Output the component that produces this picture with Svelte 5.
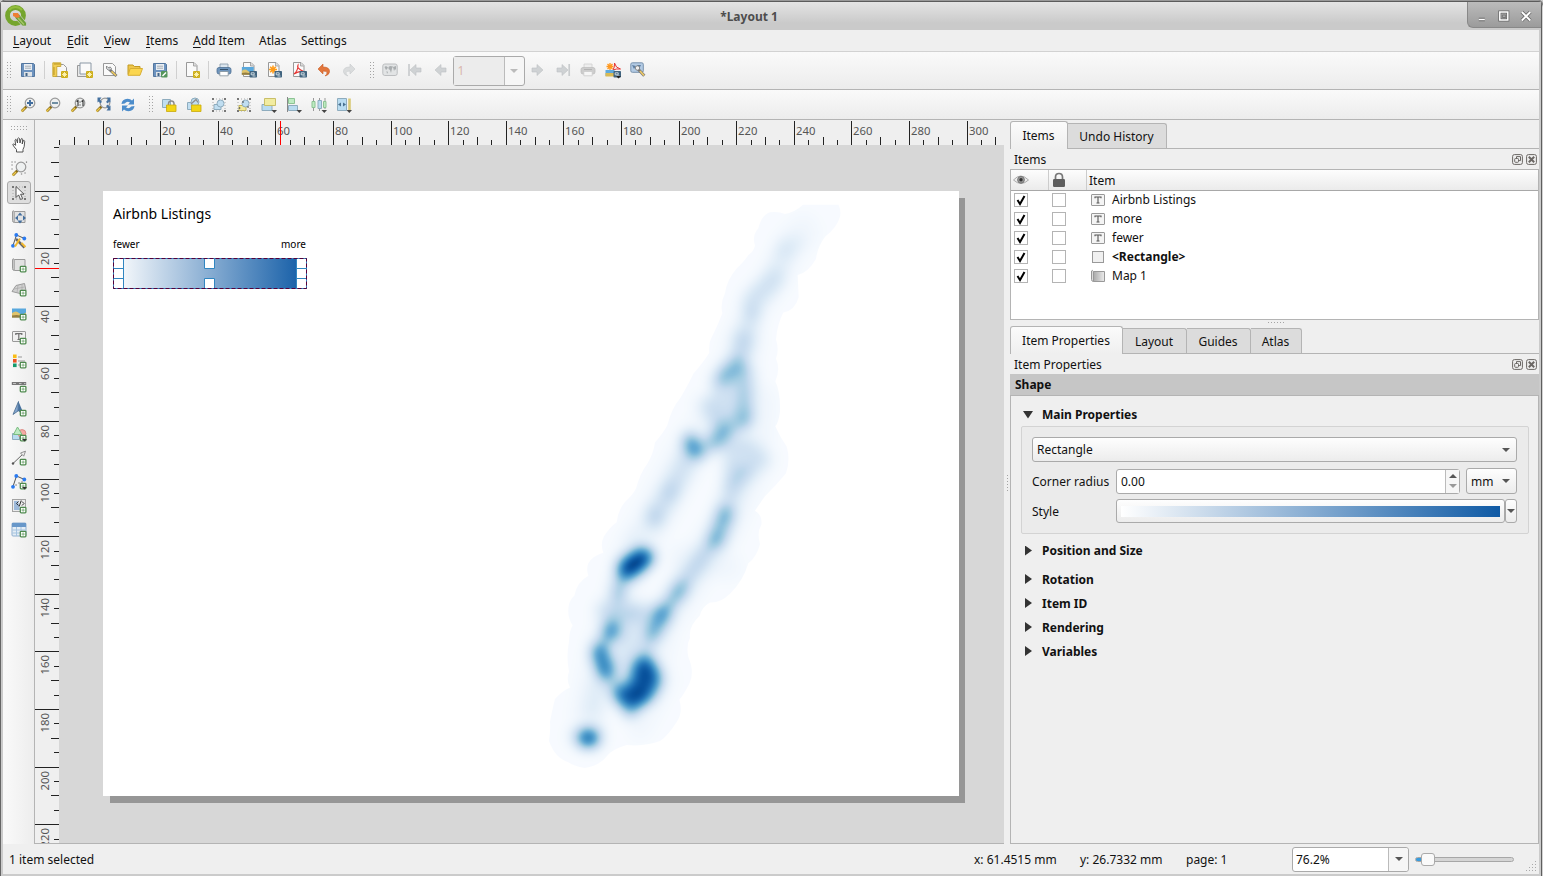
<script>
  const save = '<path d="M1.5 1.500h12l1 1v12h-13z" fill="#6d93bf" stroke="#54779f"/><path d="M4 2h8v6H4z" fill="#e9eef3"/><path d="M5 4.200h6M5 6.200h6" stroke="#a6adb5"/><path d="M4 10h8v4.500H4z" fill="#dfe3e6"/><path d="M5.500 11h2v3h-2z" fill="#426488"/>';
  const star = '<rect x="9" y="9" width="7" height="7" rx="1" fill="#cdae1c"/><path d="M12.500 10v5M10 12.500h5M10.800 10.800l3.400 3.400M14.200 10.800l-3.400 3.400" stroke="#fff6b8" stroke-width=".9"/>';
  const page = '<path d="M2.500.5h7.500l3 3v11H2.500z" fill="#fafafa" stroke="#999"/><path d="M9.500.8v3.200h3.300" fill="#ddd" stroke="#999" stroke-width=".8"/>';
  const out = '<rect x="8.500" y="9" width="7.500" height="6.500" rx=".8" fill="#41647f"/><path d="M10.200 10.800h3v2h-3zM14.500 14h-3" fill="none" stroke="#e7f0f5" stroke-width=".8"/>';
  const plus = '<rect x="9.300" y="9.300" width="5.600" height="5.600" rx=".8" fill="#fff" stroke="#4f8a4f" stroke-width="1.300"/><path d="M12.100 10.500v3.200M10.500 12.100h3.200" stroke="#7fae7f"/>';
  const lens = '<path d="M6.500 9.500L1.800 14.200" stroke="#8a6d1a" stroke-width="2.700"/><path d="M5 11L1.500 14.500" stroke="#eec94d" stroke-width="1.500"/><circle cx="10" cy="6" r="4.800" fill="#eef0f0" stroke="#999" stroke-width="1.200"/>';
  const drop = '<path d="M10.500 13h5.500l-2.700 2.900z" fill="#444"/>';
  const nodes = '<path d="M2 12.500L5.500 2 13.500 5.500" fill="none" stroke="#555"/><circle cx="2" cy="12.800" r="1.900" fill="#2a7af0"/><circle cx="5.300" cy="2" r="1.900" fill="#2a7af0"/><circle cx="13.300" cy="5.500" r="1.900" fill="#2a7af0"/>';
  const corners = '<path d="M1 1h2v2H1zM13 1h2v2h-2zM1 13h2v2H1zM13 13h2v2h-2z" fill="#777"/><path d="M5 2h7M2 5v7M5 14h7M14 5v7" stroke="#aaa" stroke-dasharray="1 2"/>';
  const photo = '<rect x="1" y="3.500" width="14" height="9" fill="#59a8dd"/><path d="M1 8q4-3 7 0t7-.5v5H1z" fill="#dfc36b"/><path d="M1 10.500q5-1 8 0t6 0v2H1z" fill="#947d41"/>';
  const left = '<path d="M3 8l6-5.500V6h5v4H9v3.500z" fill="#cfd2d4" stroke="#bec1c3" stroke-width=".6"/>';
  const right = '<path d="M13 8L7 2.500V6H2v4h5v3.500z" fill="#cfd2d4" stroke="#bec1c3" stroke-width=".6"/>';
  const printer = '<path d="M4 2h8v5H4z" fill="#dce6ee" stroke="#8395a5" stroke-width=".8"/><rect x="1" y="5.500" width="14" height="6.500" rx="2" fill="#6e95bd" stroke="#4e7093" stroke-width=".8"/><path d="M3.800 9.500h8.400v4.300H3.800z" fill="#fff" stroke="#82909b" stroke-width=".8"/><path d="M4 7.500h8" stroke="#35506a"/>';
  const book = '<path d="M3.500 2.500h10.500v11H3.500z" fill="#e2e2e2" stroke="#9a9a9a"/><path d="M3.500 2.500q-2-1.500-2 0v9q0 2 2 2" fill="#c5c5c5" stroke="#9a9a9a"/>';

  const icons = {
    save,
    newLayout: '<path d="M3.500 2.500h8l3 3v9h-11z" fill="#f7f7f7" stroke="#999"/><path d="M.8.800h8v3.700h-4v10h-4z" fill="#f2cf55" stroke="#c39f25" stroke-width=".8"/><path d="M3 1v2M5 1v2M7 1v2M1 6h2M1 8h2M1 10h2M1 12h2" stroke="#a58013" stroke-width=".7"/>' + star,
    duplicate: '<path d="M.5 3.500h11v11H.5z" fill="#e8e8e8" stroke="#999"/><path d="M3 1h11v11H3z" fill="#fafafa" stroke="#8b98a5"/>' + star,
    manager: '<path d="M1.500 1.500h9l3 3v9h-12z" fill="#fafafa" stroke="#999"/><path d="M7.500 7.500l7 6.500" stroke="#777" stroke-width="3"/><path d="M9.500 9.300l4.500 4.200" stroke="#edc95d" stroke-width="1.700"/><path d="M4.500 4q-1 3 1.700 4t3.300-1.500L8 4.800 7.500 6l-1.500-.5z" fill="#d7dadd" stroke="#777" stroke-width=".8"/>',
    open: '<path d="M1 12.500V3h5l1.300 1.500H13v3" fill="#eec64b" stroke="#c29a22"/><path d="M1 13.300L3.200 6.500h12.300L13 13.300z" fill="#fbd64f" stroke="#d7ae32"/>',
    saveAs: save + '<rect x="9" y="9" width="6.500" height="6.500" rx="1" fill="#54955b"/><path d="M10.500 14l3.500-3.500" stroke="#fff" stroke-width="1.400"/>',
    addPages: page + star,
    print: printer,
    exportImg: page + '<g transform="translate(0 2) scale(.85)">' + photo + '</g>' + out,
    exportSvg: page + '<path d="M7 3.500v8M3 7.500h8M4.200 4.700l5.600 5.600M9.800 4.700l-5.600 5.600" stroke="#ff9b18" stroke-width="1.500"/>' + out,
    exportPdf: page + '<path d="M3 12q4-3 4-9-2 3 5.500 6.500-5-.7-9.500 2.500" fill="none" stroke="#e73431" stroke-width="1.100"/>' + out,
    undo: '<path d="M2 7l5-5v3q7 0 6.500 5Q13 13 9 14q2.500-2 2-3.500T7 9v3z" fill="#e2763c" stroke="#c95f28" stroke-width=".6"/>',
    redo: '<path d="M14 7L9 2v3Q2 5 2.500 10 3 13 7 14q-2.500-2-2-3.500T9 9v3z" fill="#dadcdd" stroke="#c8cbcc" stroke-width=".6"/>',
    atlas: '<rect x=".8" y="2" width="14.400" height="11.500" rx="2" fill="#e2e4e5" stroke="#bcbec0"/><path d="M2.500 5l1.500-1 2 1.500L5 7 4 8zM6.500 5L8 4l3 .5-1 2L9 11 8 8 6.500 7zM11 5l3-1v4l-1-1-1 2zM4.500 9l1.500 1-1 2z" fill="#a9adaf"/>',
    first: '<path d="M2 2v12" stroke="#c9ccce" stroke-width="1.700"/>' + left,
    prev: left,
    next: right,
    last: right + '<path d="M14.200 2v12" stroke="#c9ccce" stroke-width="1.700"/>',
    printOff: '<g opacity=".38" style="filter:grayscale(1)">' + printer + '</g>',
    exportAtlas: '<path d="M5 1v7M1.500 4.500h7M2.500 2l5 5M7.500 2l-5 5" stroke="#ff981f" stroke-width="1.300"/><path d="M8 8q2-3 1.500-7 1 5 6 6-4-.5-7.500 1" fill="none" stroke="#e73431"/><path d="M.5 8h9v6h-9z" fill="#5faade"/><path d="M.5 11h9v3.500h-9z" fill="#d9ba54"/>' + out + '<path d="M11 14h5l-2.500 2.500z" fill="#222"/>',
    atlasSettings: '<rect x=".8" y=".800" width="12.500" height="9.500" rx="1.500" fill="#b3cbe4" stroke="#7892ad"/><path d="M2 3l4 1-2 3zM7 3h4L9 7z" fill="#5e7ea1"/><path d="M8 7l6.300 6.800" stroke="#777" stroke-width="3"/><path d="M10 9l4 4.500" stroke="#efca65" stroke-width="1.800"/><circle cx="7.500" cy="6" r="2.200" fill="#eee" stroke="#777" stroke-width=".8"/>',
    zoomIn: lens + '<path d="M10 3v6M7 6h6" stroke="#416d9e" stroke-width="1.900"/>',
    zoomOut: lens + '<path d="M7 6h6" stroke="#68889f" stroke-width="1.900"/>',
    zoomActual: lens + '<path d="M6.500 4.500L8 3.500V9M11.500 4.500L13 3.500V9" fill="none" stroke="#333" stroke-width="1.100"/><path d="M10 5h.1M10 8h.1" stroke="#333" stroke-width="1" stroke-linecap="square"/>',
    zoomFull: lens + '<path d="M2.500.500h4L5 2.500 7 5 5 6.500 4 4.500 2.500 5.500zM15.500.500h-4L13 2.500 11 5l2 1.500 1-2 1.500 1zM15.500 13.500h-4l1.500-2L11 9l2-1.500 1 2 1.500-1z" fill="#45719f"/>',
    refresh: '<path d="M1.500 7Q2 2 7.500 1.800q3 0 4.500 1.700L14 1.500v6H8l2-2Q7 3.500 4.800 6.500z" fill="#4d8dcb"/><path d="M14.500 9q-.5 5-6 5.200-3 0-4.500-1.700L2 14.500v-6h6l-2 2q3 2 5.200-1z" fill="#4d8dcb"/>',
    lock: '<path d="M1.500 2.500h8v8h-8z" fill="#c0def1" stroke="#8eacbe"/><path d="M7.500 8V6.500Q7.800 4 10.300 4T13 6.500V8" fill="none" stroke="#8c8c8c" stroke-width="1.500"/><path d="M5.500 8h9.500v6.500H5.500z" fill="#f2d516" stroke="#c9aa0b" stroke-width=".8"/>',
    unlock: '<path d="M1.500 5.500h8v7h-8z" fill="#c0def1" stroke="#8eacbe"/><circle cx="9" cy="5" r="4" fill="#c0def1" stroke="#8eacbe"/><path d="M5 7l5-4.500 2 3" fill="none" stroke="#8c8c8c" stroke-width="1.300"/><path d="M5.500 8h9.500v6.500H5.500z" fill="#f2d516" stroke="#c9aa0b" stroke-width=".8"/>',
    group: '<path d="M3 7.500h7v5H3z" fill="#c0def1" stroke="#8eacbe"/><circle cx="9.500" cy="6.500" r="3.500" fill="#c0def1" stroke="#8eacbe"/>' + corners,
    ungroup: '<path d="M3 8.500h7v5H3z" fill="#f2e99b" stroke="#c6b955"/><circle cx="9.500" cy="6.500" r="3.500" fill="#c0def1" stroke="#8eacbe"/>' + corners + '<path d="M3.500 11h.1M7 5h.1M12 10h.1" stroke="#555" stroke-width="1.300" stroke-linecap="square"/>',
    raise: '<path d="M1 7.500h10v6H1z" fill="#b9dcf1" stroke="#8eacbe"/><path d="M3.500 1.500h11v7h-11z" fill="#f2eca0" stroke="#c9bf68"/>' + drop,
    align: '<path d="M1.500 0v15" stroke="#888"/><path d="M2.500 1.500h6v5h-6z" fill="#bdebc2" stroke="#8dc394"/><path d="M2.500 8.500h9v5h-9z" fill="#b9dcf1" stroke="#8eacbe"/>' + drop,
    distribute: '<path d="M2.500 1v13M8.500 1v13M14 1v11" stroke="#999"/><path d="M1 4.500h3v6H1z" fill="#bdebc2" stroke="#8dc394"/><path d="M7 3.500h3.500v8H7z" fill="#b9dcf1" stroke="#8eacbe"/><path d="M12.500 4.500H15v6h-2.500z" fill="#bdebc2" stroke="#8dc394"/>' + drop,
    resize: '<path d="M1.500 1.500h9v12h-9z" fill="#b9dcf1" stroke="#8eacbe"/><path d="M2 7.500l3-2v4zM10 7.500l-3-2v4z" fill="#476f8e"/><path d="M13.500 1.500v11.500" stroke="#d9ca78" stroke-width="2.600"/>' + drop,
    pan: '<path d="M5.500 15v-2.500Q3 10 1.700 7.500q.8-1.500 3 .8L4 3q.8-1.500 1.700 0L6.500 6 6.700 1.500q1-1.300 1.800 0L9 6l1-4q1-1.200 1.700.2L11.200 7l1-3.300q1.300-.7 1.500.6Q13.500 11 12 12.500V15z" fill="#fff" stroke="#444" stroke-width=".9"/>',
    zoom: lens + '<path d="M1 1h.1M4 1h.1M1 4h.1M1 8h.1M15.500 1v.1M14 12h.1M10.500 13h.1" stroke="#777" stroke-width="1.200" stroke-linecap="square"/>',
    select: corners + '<path d="M5 1.500v11l2.600-2.600 2 4.600 2-1-2-4.300H13z" fill="#fff" stroke="#444" stroke-width=".9"/>',
    moveContent: book + '<path d="M9 3.500l2.500 3h-5zM9 14.500l2.500-3h-5zM4 9l3-2.500v5zM15 9l-3-2.500v5z" fill="#446f9e"/>',
    editNodes: nodes + '<path d="M5 6l8.500 8.500" stroke="#666" stroke-width="2.500"/><path d="M9 5.500l-5 8M10.500 10l4 4" stroke="#f2b92f" stroke-width="2"/>',
    addMap: book + plus,
    add3d: '<path d="M1 10.500L5 4.500l8.500-2 1.500 7-6 3z" fill="#d1d1d1" stroke="#9b9b9b"/><path d="M3 8l10.500-2M7 4l-1 7.500M11 3.300l0 8" stroke="#aaa" stroke-width=".7"/>' + plus,
    addPicture: photo + plus,
    addLabel: '<rect x="1.500" y="2.500" width="13" height="10" rx=".5" fill="#f0f0f0" stroke="#999"/><path d="M4.800 6V4.700h6V6M7.800 5v5.500M6.500 10.500h2.600" fill="none" stroke="#707070" stroke-width="1.200"/>' + plus,
    addLegend: '<path d="M2 1.500h3.600v3.600H2z" fill="#f9bd16"/><path d="M2 6h3.600v3.600H2z" fill="#ea5226"/><path d="M2 10.500h3.600v3.600H2z" fill="#159a6d"/><path d="M7 4h4M7 8h7M7 12h3" stroke="#999"/>' + plus,
    addScale: '<path d="M.8 5h14.400v3H.8z" fill="#777"/><path d="M2 6.500h3M8 6.500h2.500M13 6.500h1.500" stroke="#c2c2c2"/>' + plus,
    addNorth: '<path d="M7.500.5L2 13.500l5-3.500z" fill="#84a7cf" stroke="#47698d" stroke-width=".8"/><path d="M7.500.5L13 13.500 7 10z" fill="#47719f"/>' + plus,
    addShape: '<path d="M1.500 7.500h7v6h-7z" fill="#b9dcf1" stroke="#8eacbe"/><circle cx="11" cy="7.500" r="3.900" fill="#f5aaa4" stroke="#db8b85"/><path d="M6.500 1L2.500 8.500h8.500z" fill="#bdebc2" stroke="#79bc80"/>' + plus + '<path d="M11 13h5l-2.500 2.500z" fill="#333"/>',
    addArrow: '<path d="M2 13.500L13 3" stroke="#666"/><circle cx="2" cy="13.500" r="1.200" fill="#555"/><path d="M9.500 3L14.500 1.200l-1.800 5z" fill="#eee" stroke="#777" stroke-width=".8"/>' + plus,
    addNode: nodes + '<path d="M5 11h.1M8 9h.1M11 8h.1" stroke="#333" stroke-linecap="square"/>' + plus + '<path d="M11 13h5l-2.500 2.500z" fill="#333"/>',
    addHtml: '<rect x="1.500" y="1.500" width="13" height="12" fill="#ececec" stroke="#a3a3a3"/><path d="M3 3h4l2 9H3z" fill="#9db9da"/><path d="M7.500 3.500L5.500 5.500l2 2M11 3.500l2 2-2 2M10.200 2.500l-2 6" fill="none" stroke="#333"/>' + plus,
    addTable: '<rect x="1" y="1" width="14" height="13" rx="1" fill="#e4edf5" stroke="#8fafd0"/><path d="M1 1h14v4H1z" fill="#6797c9"/><path d="M1.500 8h13M1.500 11h13M5.500 5v9M10 5v9" stroke="#a4c3df"/>' + plus,
    label: '<rect x="1.500" y="2.500" width="13" height="11" rx=".5" fill="#f4f4f4" stroke="#999"/><path d="M5 6.200V5h6v1.200M8 5v6M6.500 11h3" fill="none" stroke="#555" stroke-width="1.100"/>',
    rect: '<rect x="2.500" y="2.500" width="11" height="11" fill="#f0f0f0" stroke="#999"/>',
    map: '<defs><linearGradient id="mapfill"><stop stop-color="#aaa"/><stop offset="1" stop-color="#ececec"/></linearGradient></defs><path d="M3.500 3.500h11v10h-11z" fill="url(#mapfill)" stroke="#999"/><path d="M3.500 13.500q-2 0-2-2V3q.5-1.500 2 .5z" fill="#ddd" stroke="#999"/>'
  };

  const row1 = ['#12.5', 'save', '|', 'newLayout', 'duplicate', 'manager', 'open', 'saveAs', '|', 'addPages', '|', 'print', 'exportImg', 'exportSvg', 'exportPdf', 'undo', 'redo', '#16', 'atlas', 'first', 'prev', '=', 'next', 'last', 'printOff', 'exportAtlas', 'atlasSettings'];
  const row2 = ['#12.5', 'zoomIn', 'zoomOut', 'zoomActual', 'zoomFull', 'refresh', '#16', 'lock', 'unlock', 'group', 'ungroup', 'raise', 'align', 'distribute', 'resize'];
  const tools = ['pan', 'zoom', 'select', 'moveContent', 'editNodes', 'addMap', 'add3d', 'addPicture', 'addLabel', 'addLegend', 'addScale', 'addNorth', 'addShape', 'addArrow', 'addNode', 'addHtml', 'addTable'];
  const menus = [['L', 'ayout', 54], ['E', 'dit', 37], ['V', 'iew', 42], ['I', 'tems', 47], ['A', 'dd Item', 66], ['', 'Atlas', 42], ['', 'Settings', 50]];
  const items = [
    ['label', 'Airbnb Listings'],
    ['label', 'more'],
    ['label', 'fewer'],
    ['rect', '<Rectangle>'],
    ['map', 'Map 1']
  ];
  const range = (a, b) => Array.from({ length: (b - a) / 5 + 1 }, (_, i) => a + i * 5);
  const hTicks = range(-15, 310).map((v) => ({ v, p: Math.floor(68 + v * 2.88) + 0.5 }));
  const vTicks = range(-15, 225).map((v) => ({ v, p: Math.floor(71 + v * 2.88) + 0.5 }));
  const len = (v) => (v % 20 === 0 ? 24 : v % 10 === 0 ? 8 : 5);
  const groups = [['Position and Size', 33], ['Rotation', 24], ['Item ID', 24], ['Rendering', 24], ['Variables', 24]];
</script>

{#snippet icon(name, size = 16)}
  <svg class="ic" width={size} height={size} viewBox="0 0 16 16">{@html icons[name]}</svg>
{/snippet}

{#snippet bar(list)}
  {#each list as n}
    {#if n[0] === '#'}
      <span class="grip" class:late={n === '#16'} style="width:{n.slice(1)}px"><i></i></span>
    {:else if n === '|'}
      <span class="sep"></span>
    {:else if n === '='}
      <span class="pagebox"><span>1</span><b><i class="dn pale"></i></b></span>
    {:else}
      <span class="tb">{@render icon(n)}</span>
    {/if}
  {/each}
{/snippet}

{#snippet dock(title)}
  <div class="dock">
    <span>{title}</span>
    <svg width="25" height="11" viewBox="0 0 25 11" fill="none" stroke="#6b6764">
      <rect x=".6" y=".6" width="9.800" height="9.800" rx="1.800" />
      <rect x="2.700" y="4.500" width="3.800" height="3.800" rx=".8" /><path d="M4.500 4V2.600h4v4H7" />
      <rect x="14.600" y=".6" width="9.800" height="9.800" rx="1.800" />
      <path d="M16.800 2.800l5.400 5.400M22.200 2.800l-5.400 5.400" stroke-width="2" />
    </svg>
  </div>
{/snippet}

<div class="win">
  <header>
    <svg class="logo" width="23" height="23" viewBox="0 0 23 23">
      <circle cx="10.500" cy="10.500" r="8" fill="none" stroke="#75a52e" stroke-width="4.800" />
      <path d="M4 5a8.500 8.500 0 0 1 13 0" fill="none" stroke="#93bd3c" stroke-width="2" />
      <path d="M10 9h4l7.500 9v3h-4L10 13z" fill="#6d9f37" stroke="#d2d2d2" stroke-width=".7" />
      <path d="M13 13l6 6.500" stroke="#a5c766" stroke-width="1.500" />
      <path d="M8 8h5l2 4-3 1-4-2z" fill="#ee7e32" />
    </svg>
    <h1>*Layout 1</h1>
    <div class="wbtns">
      <svg width="73" height="26" viewBox="1.200 0 73 26" fill="none" stroke="#fff" stroke-width="1.500">
        <path d="M12 17.500h6" stroke="#666" stroke-width="3.500" /><path d="M12 17.500h6" />
        <path d="M33 10h8v8h-8z" stroke="#666" stroke-width="3" /><path d="M33 10h8v8h-8z" /><path d="M35.500 13h3.500v2.500h-3.500z" stroke="#777" stroke-width="1" />
        <path d="M55 10l8.500 8.500M63.500 10l-8.500 8.500" stroke="#666" stroke-width="3.500" /><path d="M55 10l8.500 8.500M63.500 10l-8.500 8.500" stroke-width="1.900" />
      </svg>
    </div>
  </header>
  <nav>{#each menus as [u, t, w]}<span style="width:{w}px"><u>{u}</u>{t}</span>{/each}</nav>
  <div class="bar one">{@render bar(row1)}</div>
  <div class="bar two">{@render bar(row2)}</div>

  <main>
    <aside class="tools">
      <span class="vgrip"></span>
      {#each tools as t}<span class="tool" class:on={t === 'select'}>{@render icon(t)}</span>{/each}
    </aside>

    <section class="work">
      <svg class="hr" width="969" height="25">
        {#each hTicks as { v, p }}
          <path d="M{p} 25V{25 - len(v)}" stroke="#222" />
          {#if v % 20 === 0}<text x={p + 1.5} y="15">{v}</text>{/if}
        {/each}
        <path d="M245.500 1v24" stroke="#f00" />
      </svg>
      <svg class="vr" width="24" height="698" viewBox="0 25 24 698">
        {#each vTicks as { v, p }}
          <path d="M24 {p}H{24 - len(v)}" stroke="#222" />
          {#if v >= 0 && v % 20 === 0}<text transform="translate(14 {p + 3.500}) rotate(-90)" text-anchor="end">{v}</text>{/if}
        {/each}
        <path d="M0 148.500h24" stroke="#f00" />
      </svg>
      <div class="canvas">
        <div class="paper">
          <svg class="heat" width="856" height="605" viewBox="103 191 856 605">
            <defs>
              <filter id="ramp" filterUnits="userSpaceOnUse" x="0" y="-40" width="1020" height="1620" color-interpolation-filters="sRGB">
                <feGaussianBlur stdDeviation="19 16.500" />
                <feComponentTransfer>
                  <feFuncR type="table" tableValues=".969 .871 .776 .620 .420 .259 .129 .031 .031" />
                  <feFuncG type="table" tableValues=".984 .922 .859 .792 .682 .573 .443 .318 .188" />
                  <feFuncB type="table" tableValues="1 .969 .937 .882 .839 .776 .710 .612 .420" />
                </feComponentTransfer>
              </filter>
              <clipPath id="edge">
                <path d="M820 38L925 38Q935 55 930 70Q920 100 885 122Q862 150 858 180Q835 215 803 222L806 280Q795 315 760 320Q742 350 738 390Q748 420 738 440Q752 470 736 500Q752 530 750 580Q745 610 736 617Q750 645 770 670Q782 705 768 740Q740 770 705 800L675 838Q698 850 694 875Q680 895 690 925Q680 960 655 975Q640 1020 600 1055Q570 1080 540 1078Q515 1090 510 1112Q475 1140 480 1170Q468 1190 475 1220Q495 1260 478 1290Q460 1320 448 1332Q460 1365 440 1390Q415 1425 390 1440Q340 1455 290 1450Q250 1460 235 1475Q210 1505 165 1510Q130 1505 115 1495Q75 1485 57 1440Q62 1410 60 1390Q70 1345 75 1330Q95 1310 120 1300Q108 1280 117 1258Q108 1220 117 1180Q118 1150 128 1138Q108 1110 118 1080Q125 1065 133 1060Q140 1025 175 1008Q168 990 175 975Q190 955 220 948Q210 925 222 905Q240 880 260 868Q265 835 285 815Q310 795 318 780Q330 740 352 715Q370 690 375 660Q400 635 412 615Q425 570 450 545Q480 500 490 480Q520 450 538 425Q535 400 545 385Q565 350 577 322Q570 295 585 270Q590 235 620 205Q645 185 655 170Q672 160 675 145Q665 120 685 100Q695 65 720 58Q745 55 765 63Q795 58 820 38Z" />
              </clipPath>
            </defs>
            <g transform="translate(530 190) scale(.33333 .3827)">
              <g clip-path="url(#edge)">
                <g filter="url(#ramp)" fill="none" stroke="#fff" stroke-linecap="round" stroke-linejoin="round">
                  <path d="M-200-200h1500v2000H-200z" fill="#000" stroke="none" />
                  <path d="M820 110L780 145 730 235 665 310 640 400" stroke-width="90" stroke-opacity=".03" />
                  <path d="M640 400L590 560 480 680 370 860 310 950 250 1130 215 1220 180 1370" stroke-width="110" stroke-opacity=".035" />
                  <path d="M680 560L660 720 580 880 490 1000 390 1130 350 1280" stroke-width="110" stroke-opacity=".035" />
                  <path d="M800 135L765 155" stroke-width="44" stroke-opacity=".08" />
                  <path d="M765 160L730 235 670 300" stroke-width="54" stroke-opacity=".08" />
                  <path d="M735 230L665 285 665 325 640 400" stroke-width="50" stroke-opacity=".11" />
                  <path d="M665 320v8" stroke-width="36" stroke-opacity=".12" />
                  <path d="M640 395L625 460" stroke-width="50" stroke-opacity=".17" />
                  <path d="M620 460L590 482" stroke-width="52" stroke-opacity=".36" />
                  <path d="M585 485l-24 17" stroke-width="38" stroke-opacity=".25" />
                  <path d="M520 560L560 520 650 480 675 600 600 640 540 610z" fill="#fff" fill-opacity=".17" stroke="none" />
                  <path d="M520 560L560 600 640 610 660 480" stroke-width="50" stroke-opacity=".07" />
                  <path d="M645 480V600" stroke-width="44" stroke-opacity=".16" />
                  <path d="M640 590v16" stroke-width="36" stroke-opacity=".22" />
                  <path d="M580 632L555 655" stroke-width="48" stroke-opacity=".4" />
                  <path d="M610 620L530 680" stroke-width="40" stroke-opacity=".13" />
                  <path d="M483 660L499 680" stroke-width="48" stroke-opacity=".6" />
                  <path d="M480 690L420 790 375 855" stroke-width="56" stroke-opacity=".17" />
                  <path d="M425 780L415 795M375 845v8" stroke-width="40" stroke-opacity=".15" />
                  <path d="M370 870L310 920" stroke-width="50" stroke-opacity=".05" />
                  <path d="M590 660L655 660 710 705 640 750 600 790z" fill="#fff" fill-opacity=".14" stroke="#fff" stroke-width="40" stroke-opacity=".09" />
                  <path d="M640 740L615 770 590 840" stroke-width="54" stroke-opacity=".14" />
                  <path d="M586 848L560 910" stroke-width="50" stroke-opacity=".46" />
                  <path d="M550 920L440 1055" stroke-width="44" stroke-opacity=".26" />
                  <path d="M455 1040L425 1075 390 1115" stroke-width="38" stroke-opacity=".38" />
                  <path d="M401 1107L372 1150" stroke-width="50" stroke-opacity=".46" />
                  <path d="M365 1160L345 1220" stroke-width="40" stroke-opacity=".26" />
                  <path d="M220 1100L370 1105" stroke-width="46" stroke-opacity=".17" />
                  <path d="M310 1120L285 1250" stroke-width="66" stroke-opacity=".15" />
                  <path d="M338 962L290 990" stroke-width="58" stroke-opacity=".8" />
                  <path d="M326 968L300 986" stroke-width="54" stroke-opacity=".6" />
                  <path d="M312 978l-2 3" stroke-width="54" stroke-opacity="1" />
                  <path d="M352 958h8" stroke-width="36" stroke-opacity=".4" />
                  <path d="M275 1015L265 1055" stroke-width="38" stroke-opacity=".36" />
                  <path d="M265 1060L250 1130" stroke-width="46" stroke-opacity=".13" />
                  <path d="M247 1148L241 1156" stroke-width="50" stroke-opacity=".6" />
                  <path d="M235 1160L210 1200" stroke-width="40" stroke-opacity=".2" />
                  <path d="M210 1209L226 1252" stroke-width="50" stroke-opacity=".72" />
                  <path d="M230 1260L262 1310" stroke-width="40" stroke-opacity=".28" />
                  <path d="M205 1290L185 1360" stroke-width="50" stroke-opacity=".09" />
                  <path d="M344 1256L356 1278 340 1303 332 1300z" fill="#fff" fill-opacity=".7" stroke-width="76" stroke-opacity=".76" />
                  <path d="M340 1252l12 16" stroke-width="50" stroke-opacity=".58" />
                  <path d="M325 1320L280 1318" stroke-width="60" stroke-opacity=".62" />
                  <path d="M280 1320L300 1360 330 1330z" fill="#fff" fill-opacity=".5" stroke-width="36" stroke-opacity=".5" />
                  <path d="M168 1432h14" stroke-width="48" stroke-opacity=".84" />
                  <path d="M140 1428h60" stroke-width="46" stroke-opacity=".15" />
                  <path d="M450 960L600 985M400 1280L330 1400" stroke-width="70" stroke-opacity=".03" />
                </g>
              </g>
            </g>
          </svg>
          <div class="legend">
            <p class="ttl">Airbnb Listings</p>
            <p class="ends"><span>fewer</span><span>more</span></p>
            <div class="grad">
              <svg width="194" height="31" fill="#fff" stroke="#3186c1">
                <path d="M.5.500h10v30H.5zM.5 10.500h10M.5 20.500h10M183.500.500h10v30h-10zM183.500 10.500h10M183.500 20.500h10M91.500.500h10v10h-10zM91.500 20.500h10v10h-10z" />
                <path d="M.5.500h193v30H.5z" fill="none" stroke="#3186c1" />
                <path d="M.5.500h193v30H.5z" fill="none" stroke="#55003a" stroke-dasharray="4 2" />
              </svg>
            </div>
          </div>
        </div>
      </div>
    </section>

    <span class="split"></span>

    <section class="side">
      <div class="tabs t1"><span class="cur" style="width:58px">Items</span><span style="width:99px">Undo History</span></div>
      {@render dock('Items')}
      <div class="tree">
        <div class="th">
          <span><svg width="16" height="12" viewBox="0 0 16 12"><path d="M.5 6q7-8 15 0-7.500 7-15 0z" fill="#eee" stroke="#aaa" /><circle cx="8" cy="5.800" r="3.400" fill="#999" stroke="#777" /><circle cx="8" cy="5.800" r="1.700" fill="#333" /></svg></span>
          <span><svg width="14" height="16" viewBox="0 0 14 16"><path d="M3.500 8V5q0-3.500 3.500-3.500T10.500 5v3" fill="none" stroke="#777" stroke-width="1.700" /><rect x="1" y="7" width="12" height="8" rx="1.200" fill="#5e5e5e" /></svg></span>
          <span class="name">Item</span>
        </div>
        {#each items as [ic, name]}
          <div class="tr">
            <span class="cb"><svg width="12" height="12" viewBox="0 0 12 12"><path d="M2.500 6l2.500 4L9.500 2" fill="none" stroke="#000" stroke-width="2" /></svg></span>
            <span class="cb two"></span>
            {@render icon(ic)}
            <span class="nm" class:bold={ic === 'rect'}>{name}</span>
          </div>
        {/each}
      </div>
      <span class="hsplit"></span>
      <div class="tabs t2"><span class="cur" style="width:113px">Item Properties</span><span style="width:64px">Layout</span><span style="width:64px">Guides</span><span style="width:51px">Atlas</span></div>
      {@render dock('Item Properties')}
      <div class="shape">Shape</div>
      <div class="props">
        <div class="gh main"><i class="open"></i>Main Properties</div>
        <div class="box">
          <div class="field combo wide">Rectangle<i class="dn"></i></div>
          <div class="line l1">
            <label for="radius">Corner radius</label>
            <div class="field spin" id="radius"><span>0.00</span><b><i class="up"></i><i class="dn pale"></i></b></div>
            <div class="field combo mm">mm<i class="dn"></i></div>
          </div>
          <div class="line l2">
            <span class="lb">Style</span>
            <div class="field swatch"><i></i></div>
            <div class="field more"><i class="dn"></i></div>
          </div>
        </div>
        {#each groups as [g, h]}<div class="gh" style="height:{h}px"><i class="shut"></i>{g}</div>{/each}
      </div>
    </section>
  </main>

  <footer>
    <span class="msg">1 item selected</span>
    <span class="xy">x: 61.4515 mm</span><span class="xy">y: 26.7332 mm</span><span class="xy pg">page: 1</span>
    <div class="field zoomv"><span>76.2%</span><b><i class="dn"></i></b></div>
    <div class="slider"><i></i><b></b></div>
    <svg class="size" width="12" height="12"><path d="M10.500 1v10M7.500 4v7M4.500 7v4M1.500 10v1" stroke="#aaa" stroke-dasharray="1 2" /></svg>
  </footer>
</div>

<style>
  :global(body) { background: #cbcbcb; overflow: hidden; }
  .win { box-sizing: border-box; width: 1543px; height: 876px; padding: 2px 4px 2px 3px; display: flex; flex-direction: column; background: #efefef; font: 12px "Noto Sans", sans-serif; color: #111; border-radius: 5px 5px 0 0;
    box-shadow: inset 1px 0 #666, inset 0 1px #999, inset 0 2px #5c5c5c, inset -1px 0 #d2d2d2, inset -2px 0 #5e5e5e, inset -4px 0 #cbcbcb, inset 3px 0 #cbcbcb, inset 0 -2px #cbcbcb; }
  .win :global(*) { box-sizing: border-box; }
  .ic { display: block; flex: none; overflow: visible; }
  header { height: 28px; flex: none; margin: 0 -2px; display: flex; align-items: center; background: linear-gradient(#e4e4e4, #cacaca 75%); }
  .logo { margin: 1px 0 0 4px; }
  h1 { flex: 1; margin: 1px 0 0 3px; text-align: center; font-size: 12px; font-weight: 700; color: #4d4d4d; }
  .wbtns { width: 74px; height: 26px; margin-top: -2px; background: linear-gradient(#bbb, #9b9b9b); border: 1px solid #888; border-width: 0 0 1px 1px; border-radius: 0 0 0 6px; }
  .wbtns svg { display: block; }
  nav { height: 22px; flex: none; padding-left: 10px; display: flex; line-height: 21px; border-bottom: 1px solid #d2d2d2; white-space: nowrap; }
  nav u { text-underline-offset: 2px; }
  .bar { display: flex; align-items: center; flex: none; background: linear-gradient(#fafafa, #ececec); border-bottom: 1px solid #b4b4b4; }
  .one { height: 38px; padding-bottom: 1px; }
  .two { height: 30px; }
  .tb { width: 25px; display: flex; justify-content: center; }
  .sep { width: 7px; height: 18px; border-left: 1px solid #d0d0d0; transform: translateX(3px); }
  .grip { display: flex; justify-content: center; }
  .late { padding-left: 5px; }
  .grip i { width: 5px; height: 17px; background: radial-gradient(circle at .5px .5px, #a4a4a4 .6px, transparent .8px) 0 0 / 3px 3px; }
  .pagebox { width: 72px; height: 30px; margin: 1px 1px 0 0; display: flex; border: 1px solid #aaa; border-radius: 3px; background: #f6f6f6; color: #d9b7ad; line-height: 28px; }
  .pagebox span { flex: 1; padding-left: 4px; background: #ececec; }
  .pagebox b { width: 20px; border-left: 1px solid #bbb; display: grid; place-items: center; }
  .dn, .up { width: 0; height: 0; border: 4px solid transparent; border-top-color: #555; border-bottom: 0; flex: none; }
  .up { border-top: 0; border-bottom: 4px solid #555; }
  .dn.pale { border-top-color: #bbb; }
  main { flex: 1; min-height: 0; display: flex; }
  .tools { width: 32px; flex: none; background: linear-gradient(90deg, #fafafa, #ededed); border-right: 1px solid #b4b4b4; display: flex; flex-direction: column; align-items: center; padding: 6px 0 0 1px; }
  .vgrip { width: 17px; height: 5px; margin-bottom: 2px; background: radial-gradient(circle at .5px .5px, #a4a4a4 .6px, transparent .8px) 0 0 / 3px 3px; flex: none; }
  .tool { width: 24px; height: 24.060px; display: grid; place-items: center; flex: none; }
  .tool.on { background: #dedede; border: 1px solid #aaa; border-radius: 3px; height: 23px; margin-bottom: 1px; }
  .work { width: 969px; flex: none; display: grid; grid-template: 25px 1fr / 24px 1fr; border-bottom: 1px solid #b4b4b4; }
  .work > svg { display: block; }
  .hr { grid-column: 1 / 3; }
  .work text { font-size: 11.300px; fill: #555; }
  .canvas { background: #d7d7d7; padding: 46px 0 0 44px; overflow: hidden; }
  .paper { width: 856px; height: 605px; background: #fff; box-shadow: 6px 7px 0 #969696, 7px 7px 0 -1px #969696; clip-path: polygon(0 0, 856px 0, 856px 7px, 862px 7px, 862px 612px, 7px 612px, 7px 605px, 0 605px); display: grid; }
  .heat { display: block; grid-area: 1 / 1; }
  .legend { grid-area: 1 / 1; width: 194px; margin: 14px 0 0 10px; color: #000; }
  p { margin: 0; }
  .ttl { font-size: 14px; line-height: 18px; white-space: nowrap; }
  .ends { display: flex; justify-content: space-between; font-size: 10px; line-height: 14px; margin-top: 14px; padding-right: 1px; }
  .grad { margin-top: 7px; height: 31px; background: linear-gradient(90deg, #fff, #0f5aa5); }
  .grad svg { display: block; }
  .split { width: 6px; flex: none; background: radial-gradient(circle at 3.500px .5px, #a4a4a4 .6px, transparent .8px) 0 355px / 6px 3px repeat-y; -webkit-mask: linear-gradient(#000, #000) 0 355px / 6px 18px no-repeat; }
  .side { width: 529px; display: flex; flex-direction: column; }
  .tabs { display: flex; align-items: flex-end; flex: none; border-bottom: 1px solid #b4b4b4; }
  .tabs span { height: 25px; line-height: 25px; text-align: center; background: #dcdcdc; border: 1px solid #b4b4b4; border-left: 0; border-bottom: 0; border-radius: 0 3px 0 0; padding-right: 1px; }
  .tabs .cur { height: 28px; line-height: 27px; background: linear-gradient(#fbfbfb, #efefef); border-left: 1px solid #b4b4b4; border-radius: 3px 3px 0 0; margin-bottom: -1px; }
  .t1 { height: 29px; }
  .t2 { height: 28px; }
  .dock { height: 20px; flex: none; display: flex; justify-content: space-between; align-items: center; padding: 1px 2px 0 4px; }
  .tree { height: 151px; flex: none; background: #fff; border: 1px solid #b4b4b4; }
  .th { height: 21px; display: flex; background: linear-gradient(#fdfdfd, #ebebeb); border-bottom: 1px solid #a8a8a8; margin-bottom: -1px; }
  .th span { width: 38px; padding-left: 2px; border-right: 1px solid #ccc; display: flex; align-items: center; }
  .th span + span { padding-left: 3px; }
  .th .name { border: 0; padding-left: 2px; }
  .tr { height: 19px; display: flex; align-items: center; padding-left: 3px; }
  .cb { width: 14px; height: 14px; border: 1px solid #b4b4b4; background: #fff; flex: none; }
  .cb svg { display: block; }
  .cb.two { margin: 0 24px; }
  .nm { margin-left: 6px; }
  .bold { font-weight: 700; }
  .hsplit { height: 6px; flex: none; margin-left: 258px; width: 18px; background: radial-gradient(circle at .5px 1.500px, #a4a4a4 .6px, transparent .8px) 0 1px / 3px 6px; }
  .shape { height: 22px; flex: none; background: #c6c6c6; border-bottom: 1px solid #b4b4b4; padding-left: 5px; font-weight: 700; line-height: 21px; }
  .props { flex: 1; border: 1px solid #b4b4b4; border-top: 0; padding: 6px 9px 0 10px; }
  .gh { display: flex; align-items: center; font-weight: 700; gap: 9px; }
  .gh i { margin-left: 2px; width: 10px; height: 10px; background: #333; }
  .open { clip-path: polygon(0 15%, 100% 15%, 50% 90%); }
  .shut { clip-path: polygon(20% 0, 90% 50%, 20% 100%); }
  .main { height: 24px; padding-top: 1px; }
  .box { height: 108px; background: #ebebeb; border: 1px solid #d3d3d3; border-radius: 2px; padding: 10px 11px 0 10px; }
  .field { border: 1px solid #aaa; border-radius: 3px; background: linear-gradient(#fefefe, #ececec); display: flex; align-items: center; flex: none; }
  .combo { justify-content: space-between; padding: 0 6px 0 4px; }
  .wide { height: 25px; }
  .line { display: flex; align-items: center; }
  .l1 { height: 26px; margin-top: 6px; }
  .l2 { height: 24px; margin-top: 5px; }
  .line label, .lb { width: 84px; flex: none; white-space: nowrap; }
  .spin { width: 344px; height: 25px; background: #fff; margin-right: 6px; }
  .spin span { flex: 1; padding-left: 4px; }
  .spin b { width: 14px; height: 100%; border-left: 1px solid #bbb; background: #f6f6f6; display: flex; flex-direction: column; align-items: center; justify-content: center; gap: 6px; }
  .spin .pale { border-top-color: #999; }
  .mm { width: 51px; height: 26px; }
  .swatch { width: 389px; height: 24px; padding: 0 4px; }
  .swatch i { flex: 1; height: 11px; background: linear-gradient(90deg, #fff, #0f5aa5); }
  .more { width: 12px; height: 24px; justify-content: center; }
  footer { height: 30px; flex: none; display: flex; align-items: center; padding: 0 2px 0 6px; white-space: nowrap; }
  .msg { width: 965px; }
  .xy { width: 106px; }
  .zoomv { width: 117px; height: 25px; background: #fff; }
  .zoomv span { flex: 1; padding-left: 3px; }
  .zoomv b { width: 20px; height: 100%; border-left: 1px solid #bbb; background: #f6f6f6; display: grid; place-items: center; border-radius: 0 3px 3px 0; }
  .slider { width: 99px; height: 14px; margin-left: 6px; display: grid; align-items: center; flex: none; }
  .slider i { grid-area: 1 / 1; height: 5px; border: 1px solid #a7a7a7; border-radius: 3px; background: linear-gradient(90deg, #3a9cdc 10px, #d5d5d5 10px); }
  .slider b { grid-area: 1 / 1; width: 14px; height: 13px; margin-left: 6px; border: 1px solid #aaa; border-radius: 3px; background: #fafafa; }
  .size { margin: 14px 0 0 auto; }
</style>
